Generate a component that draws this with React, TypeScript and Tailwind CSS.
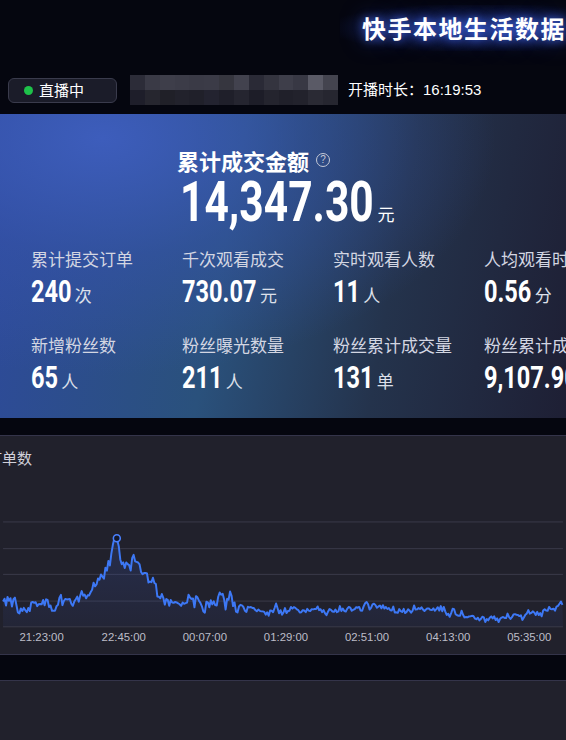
import React from "react";

function mulberry32(a: number) {
  return function () {
    a |= 0;
    a = (a + 0x6d2b79f5) | 0;
    let t = Math.imul(a ^ (a >>> 15), 1 | a);
    t = (t + Math.imul(t ^ (t >>> 7), 61 | t)) ^ t;
    return ((t ^ (t >>> 14)) >>> 0) / 4294967296;
  };
}

const ctrl: [number, number][] = [
  [0, 605], [30, 606], [60, 607], [75, 602], [82, 590], [88, 598], [95, 585],
  [102, 574], [108, 562], [115, 538], [119, 560], [126, 566], [133, 561],
  [140, 578], [150, 582], [157, 597], [170, 602], [200, 603], [230, 600],
  [250, 611], [280, 612], [320, 610], [350, 609], [375, 606], [400, 610],
  [440, 610], [455, 615], [475, 619], [520, 616], [545, 614], [566, 603],
];

function base(x: number) {
  for (let i = 0; i < ctrl.length - 1; i++) {
    const [x0, y0] = ctrl[i];
    const [x1, y1] = ctrl[i + 1];
    if (x >= x0 && x <= x1) return y0 + ((y1 - y0) * (x - x0)) / (x1 - x0);
  }
  return ctrl[ctrl.length - 1][1];
}

const TOP = 470;
const pts: [number, number][] = (() => {
  const rand = mulberry32(23);
  const out: [number, number][] = [];
  let s = 0;
  for (let x = 0; x <= 566; x += 1.5) {
    if (Math.abs(x - 115) < 1.5) {
      out.push([115, 538]);
      continue;
    }
    s = s * 0.45 + (rand() - 0.5) * 9;
    const amp = x < 240 ? 1.1 : 0.6;
    const spike = rand() < 0.06 ? -(rand() * 8) : 0;
    const y = base(x) + (s + (rand() - 0.5) * 7 + spike) * amp;
    out.push([x, y]);
  }
  return out;
})();

const linePath = pts.map(([x, y], i) => `${i ? "L" : "M"}${x.toFixed(1)} ${(y - TOP).toFixed(1)}`).join(" ");
const areaPath = `${linePath} L566 157 L0 157 Z`;

const topRow = ["#2c2c38", "#3a3a46", "#3e3e4a", "#3c3c48", "#3a3a46", "#3b3b47", "#36363f", "#42424e", "#2a2a36", "#34343f", "#3e3e4a", "#383844", "#5a5a66", "#44444f"];
const botRow = ["#1e1e2a", "#26262f", "#202028", "#22222c", "#20202a", "#232330", "#1f1f2a", "#252530", "#1d1d28", "#24242e", "#20202a", "#22222c", "#2a2a34", "#262630"];

const stats1 = [
  { label: "累计提交订单", value: "240", unit: "次" },
  { label: "千次观看成交", value: "730.07", unit: "元" },
  { label: "实时观看人数", value: "11", unit: "人" },
  { label: "人均观看时长", value: "0.56", unit: "分" },
];
const stats2 = [
  { label: "新增粉丝数", value: "65", unit: "人" },
  { label: "粉丝曝光数量", value: "211", unit: "人" },
  { label: "粉丝累计成交量", value: "131", unit: "单" },
  { label: "粉丝累计成交金额", value: "9,107.90", unit: "元" },
];

const axis = [
  { x: 39, t: "21:23:00" },
  { x: 122, t: "22:45:00" },
  { x: 204, t: "00:07:00" },
  { x: 286, t: "01:29:00" },
  { x: 368, t: "02:51:00" },
  { x: 450, t: "04:13:00" },
  { x: 532, t: "05:35:00" },
];

const SCALE = 0.76;
// approximate Roboto Bold advance widths in em
function emWidth(s: string) {
  let w = 0;
  for (const ch of s) {
    if (ch >= "0" && ch <= "9") w += 0.562;
    else if (ch === ",") w += 0.22;
    else if (ch === ".") w += 0.27;
    else w += 0.5;
  }
  return w;
}

function Condensed({ text, className }: { text: string; className: string }) {
  return (
    <span className={className} style={{ marginRight: `${-(1 - SCALE) * emWidth(text)}em` }}>
      {text}
    </span>
  );
}

function StatRow({ items }: { items: { label: string; value: string; unit: string }[] }) {
  return (
    <div className="flex pl-[31px]">
      {items.map((it) => (
        <div key={it.label} className="w-[151px] shrink-0 flex flex-col">
          <div className="text-[17px] leading-[24px] text-[#d3d6e2] whitespace-nowrap">{it.label}</div>
          <div className="flex items-baseline mt-[4px] whitespace-nowrap">
            <Condensed
              text={it.value}
              className="inline-block origin-left scale-x-[0.76] text-[31px] leading-[34px] font-bold text-white font-['Roboto',sans-serif]"
            />
            <span className="ml-[3px] text-[17px] text-[#dde0ea]">{it.unit}</span>
          </div>
        </div>
      ))}
    </div>
  );
}

export default function App() {
  return (
    <div className="w-[566px] h-[740px] overflow-hidden bg-[#05060f] text-white font-['Noto_Sans_CJK_SC','Noto_Sans',sans-serif]">
      {/* header */}
      <div className="h-[56px] flex items-center justify-end">
        <div className="h-[46px] pl-[22px] flex items-center bg-[radial-gradient(ellipse_at_62%_50%,rgba(45,80,190,0.6)_0%,rgba(30,50,140,0.28)_45%,transparent_78%)]">
          <span className="text-[24px] font-bold tracking-[1.5px] whitespace-nowrap [text-shadow:0_0_10px_rgba(80,120,255,0.8),0_0_22px_rgba(50,80,220,0.6)]">
            快手本地生活数据
          </span>
        </div>
      </div>

      {/* status row */}
      <div className="mt-[19px] h-[30px] flex items-center">
        <div className="ml-[8px] w-[109px] h-[25px] rounded-[6px] border border-[#3a3b4c] bg-[#1b1c29] flex items-center pl-[15px]">
          <span className="w-[9px] h-[9px] rounded-full bg-[#1ec24a]" />
          <span className="ml-[6px] text-[15px] leading-[20px] text-white">直播中</span>
        </div>
        <div className="ml-[13px] w-[208px] h-[30px] grid grid-cols-[repeat(14,1fr)] grid-rows-2">
          {topRow.map((c, i) => (
            <div key={"t" + i} style={{ backgroundColor: c }} />
          ))}
          {botRow.map((c, i) => (
            <div key={"b" + i} style={{ backgroundColor: c }} />
          ))}
        </div>
        <div className="ml-[10px] text-[15px] text-white whitespace-nowrap">
          开播时长：<span className="font-['Liberation_Sans',sans-serif]">16:19:53</span>
        </div>
      </div>

      {/* main panel */}
      <div className="mt-[9px] h-[304px] bg-[radial-gradient(ellipse_at_18%_8%,rgba(62,94,190,0.95)_0%,rgba(55,85,175,0.5)_30%,transparent_60%),linear-gradient(100deg,#2e4a9c_0%,#2a517c_40%,#24334c_68%,#1e1f34_100%)] flex flex-col">
        <div className="pt-[32px] pl-[177px] flex items-center">
          <span className="text-[22px] leading-[28px] font-bold">累计成交金额</span>
          <span className="ml-[7px] w-[14px] h-[14px] rounded-full border border-[#c5c9d6] text-[10px] leading-[12px] text-center text-[#c5c9d6] font-['Liberation_Sans',sans-serif]">
            ?
          </span>
        </div>
        <div className="pl-[180px] flex items-baseline">
          <Condensed
            text="14,347.30"
            className="inline-block origin-left scale-x-[0.76] text-[56px] leading-[56px] font-bold font-['Roboto',sans-serif]"
          />
          <span className="ml-[2px] text-[17px]">元</span>
        </div>
        <div className="mt-[17px]">
          <StatRow items={stats1} />
        </div>
        <div className="mt-[24px]">
          <StatRow items={stats2} />
        </div>
      </div>

      {/* chart card */}
      <div className="mt-[17px] h-[220px] bg-[#21212c] border-t border-b border-[#34344a] flex flex-col">
        <div className="pt-[12px] -ml-[13px] text-[15px] leading-[20px] text-[#d0d0da]">订单数</div>
        <svg className="mt-[3px] block" width={566} height={185} viewBox="0 0 566 185">
          <defs>
            <linearGradient id="fillg" x1="0" y1="0" x2="0" y2="1">
              <stop offset="0%" stopColor="#3a55b0" stopOpacity="0.25" />
              <stop offset="100%" stopColor="#3a55b0" stopOpacity="0.08" />
            </linearGradient>
          </defs>
          {[51, 78, 104, 131, 157].map((y) => (
            <line key={y} x1={0} x2={566} y1={y + 0.5} y2={y + 0.5} stroke="#3a3a4a" strokeWidth={1} />
          ))}
          <path d={areaPath} fill="url(#fillg)" />
          <path d={linePath} fill="none" stroke="#3d78f5" strokeWidth={2} strokeLinejoin="round" />
          <circle cx={115} cy={538 - TOP} r={3.5} fill="#14182a" stroke="#4a80ff" strokeWidth={1.6} />
          {axis.map((a) => (
            <text
              key={a.t}
              x={a.x}
              y={172}
              textAnchor="middle"
              fontSize={11.5}
              fill="#bdbdc8"
              fontFamily="'Liberation Sans', Arial, sans-serif"
            >
              {a.t}
            </text>
          ))}
        </svg>
      </div>

      {/* second card */}
      <div className="mt-[25px] h-[80px] bg-[#21212c] border-t border-[#34344a]" />
    </div>
  );
}
